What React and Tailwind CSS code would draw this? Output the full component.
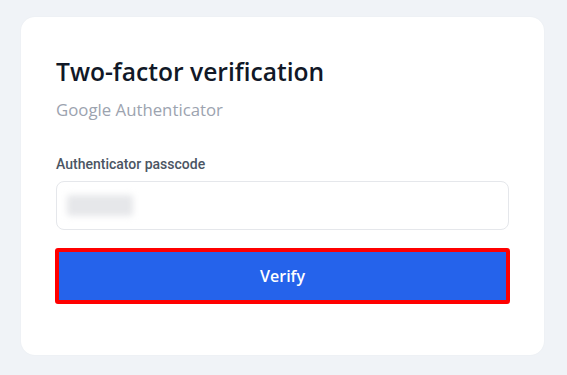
import React from 'react';

const App = () => {
  return (
    <div
      className="min-h-screen w-full bg-[#f0f3f7] pt-[17px] pl-[21px]"
      style={{ fontFamily: "'Open Sans', 'Noto Sans', sans-serif" }}
    >
      <div className="w-[523px] h-[338px] bg-white rounded-[14px] shadow-[0_0_2px_rgba(0,0,0,0.04)] pt-[39px] px-[35px]">
        <h2 className="text-[24.6px] leading-[32px] font-semibold text-[#111827]">
          Two-factor verification
        </h2>
        <p className="mt-[10px] text-[16.8px] leading-[24px] text-[#9ca3af]">Google Authenticator</p>

        <label className="block mt-[32px] font-[Roboto,sans-serif] text-[14px] leading-[20px] font-medium text-[#4b5563]">
          Authenticator passcode
        </label>
        <div className="mt-[7px] h-[49px] w-[453px] border border-[#e5e7eb] rounded-[8px] flex items-center px-[10px]">
          <div className="w-[66px] h-[21px] bg-[#e6e7ea] rounded-[3px] blur-[3px]" />
        </div>

        <button
          type="button"
          className="mt-[18px] w-[455px] h-[56px] -ml-px bg-[#2563eb] border-[4px] border-[#ff0000] rounded-[3px] text-white text-[16px] font-semibold"
        >
          Verify
        </button>
      </div>
    </div>
  );
};

export default App;
